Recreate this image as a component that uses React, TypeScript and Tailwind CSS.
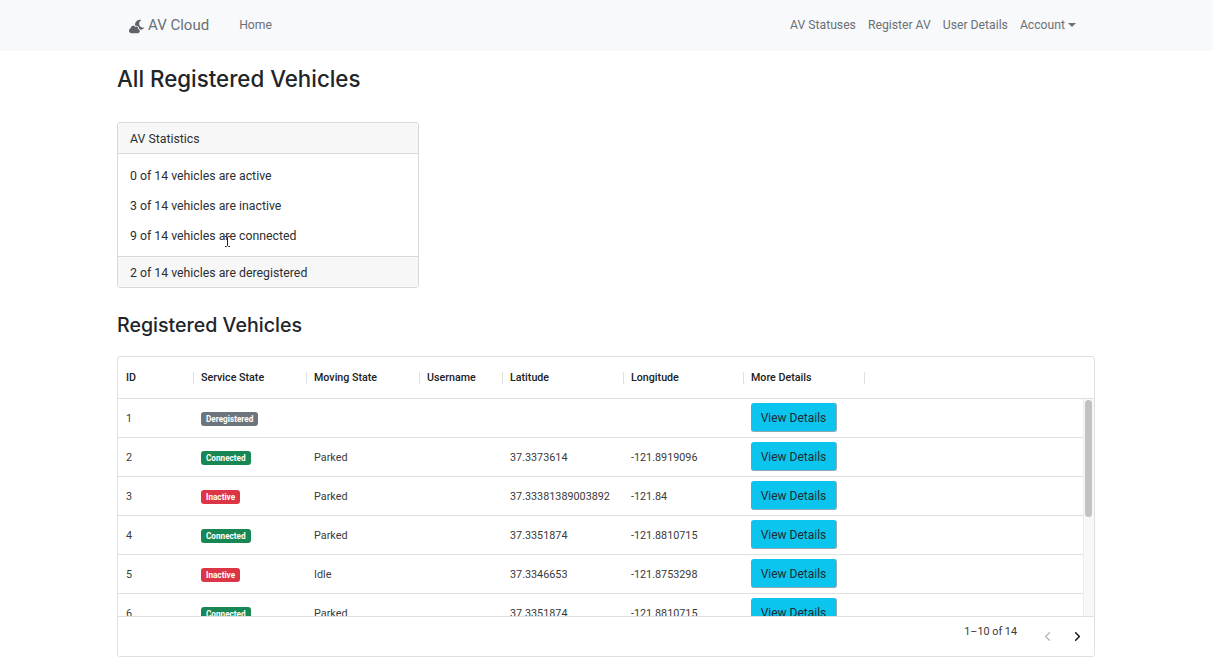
import { FaCloudMoon } from 'react-icons/fa';
import { ChevronLeft, ChevronRight } from 'lucide-react';

const navLinks = ['AV Statuses', 'Register AV', 'User Details'];

const columns = ['ID', 'Service State', 'Moving State', 'Username', 'Latitude', 'Longitude', 'More Details'];

const stateClass: Record<string, string> = {
  Deregistered: 'bg-[#6c757d]',
  Connected: 'bg-[#198754]',
  Inactive: 'bg-[#dc3545]',
};

const rows = [
  { id: 1, state: 'Deregistered', moving: '', lat: '', lng: '' },
  { id: 2, state: 'Connected', moving: 'Parked', lat: '37.3373614', lng: '-121.8919096' },
  { id: 3, state: 'Inactive', moving: 'Parked', lat: '37.33381389003892', lng: '-121.84' },
  { id: 4, state: 'Connected', moving: 'Parked', lat: '37.3351874', lng: '-121.8810715' },
  { id: 5, state: 'Inactive', moving: 'Idle', lat: '37.3346653', lng: '-121.8753298' },
  { id: 6, state: 'Connected', moving: 'Parked', lat: '37.3351874', lng: '-121.8810715' },
];

const gridCols = 'grid grid-cols-[75px_113px_113px_83px_121px_120px_121px]';

export default function App() {
  return (
    <div className="h-[665px] overflow-hidden bg-white font-['Roboto','Liberation_Sans',sans-serif] text-[#212529]">
      {/* Navbar */}
      <nav className="h-[51px] bg-[#f8f9fa] pl-[129px] pr-[137px] flex items-center text-[12.2px] text-[#6b7075]">
        <a className="flex items-center gap-[4px] text-[15px] text-[#6b7075]">
          <FaCloudMoon className="h-[15px] w-[15px] mt-[2px] text-[#5f6469]" />
          <span>AV Cloud</span>
        </a>
        <a className="ml-[30px]">Home</a>
        <div className="ml-auto flex items-center gap-[12px]">
          {navLinks.map((item) => (
            <a key={item}>{item}</a>
          ))}
          <a className="flex items-center gap-[3px]">
            Account
            <span className="mb-[1px] border-x-[4px] border-t-[4px] border-x-transparent border-t-[#6b7075]" />
          </a>
        </div>
      </nav>

      <main className="mx-[117px] w-[978px]">
        <h1 className="mt-[12px] font-['Inter','Liberation_Sans',sans-serif] text-[22.3px] leading-[32px] font-medium text-[#212529]">All Registered Vehicles</h1>

        {/* Stats card */}
        <div className="mt-[27px] w-[302px] h-[166px] flex flex-col rounded-[3px] border border-[#d9d9d9] text-[12.3px] text-[#2b2f33] overflow-hidden">
          <div className="h-[31px] flex items-center pt-[2px] px-[12px] bg-[#f7f7f7] border-b border-[#d9d9d9]">AV Statistics</div>
          <div className="relative flex-1 px-[12px] pt-[7px]">
            <p className="h-[30px] leading-[30px]">0 of 14 vehicles are active</p>
            <p className="h-[30px] leading-[30px]">3 of 14 vehicles are inactive</p>
            <p className="h-[30px] leading-[30px]">9 of 14 vehicles are connected</p>
            {/* text cursor caught in the shot */}
            <svg className="absolute left-[106px] top-[82px]" width="7" height="11" viewBox="0 0 7 11" fill="none" stroke="#222" strokeWidth="1">
              <path d="M1 .5h1.5l1 1 1-1H6M3.5 1.5v8M1 10.5h1.5l1-1 1 1H6" />
            </svg>
          </div>
          <div className="h-[31px] flex items-center pt-[2px] px-[12px] bg-[#f7f7f7] border-t border-[#d9d9d9]">2 of 14 vehicles are deregistered</div>
        </div>

        <h2 className="mt-[23px] font-['Inter','Liberation_Sans',sans-serif] text-[19.6px] leading-[28px] font-medium text-[#212529]">Registered Vehicles</h2>

        {/* Data grid */}
        <div className="mt-[17px] h-[301px] flex flex-col rounded-[3px] border border-[#e0e0e0] text-[#3a3a3a] overflow-hidden">
          <div className={`${gridCols} h-[42px] shrink-0 items-center border-b border-[#e0e0e0] text-[10.7px] font-medium text-[#212121]`}>
            {columns.map((col) => (
              <div key={col} className="relative pl-[8px] pt-[1px] flex items-center h-full">
                {col}
                <span className="absolute right-[-1px] top-[15px] h-[12px] w-px bg-[#e0e0e0]" />
              </div>
            ))}
          </div>

          <div className="flex flex-1 min-h-0">
            <div className="flex-1 min-w-0 overflow-hidden">
              {rows.map((row) => (
                <div key={row.id} className="h-[39px] border-b border-[#e0e0e0]">
                  <div className={`${gridCols} h-[38px] items-center text-[10.8px]`}>
                    <div className="pl-[8px] pt-[2px]">{row.id}</div>
                    <div className="pl-[8px] pt-[2px]">
                      <span className={`inline-block rounded-[3px] px-[5px] text-[8.2px] leading-[14px] font-bold text-white ${stateClass[row.state]}`}>
                        {row.state}
                      </span>
                    </div>
                    <div className="pl-[8px] pt-[2px]">{row.moving}</div>
                    <div className="pl-[8px]" />
                    <div className="pl-[8px] pt-[2px]">{row.lat}</div>
                    <div className="pl-[8px] pt-[2px]">{row.lng}</div>
                    <div className="pl-[8px] pb-[1px]">
                      <button className="h-[29px] w-[86px] pt-[1px] rounded-[3px] bg-[#0cc5ef] border-r border-b border-[#8fa9b5] text-[12px] text-[#1d2b33]">
                        View Details
                      </button>
                    </div>
                  </div>
                </div>
              ))}
            </div>
            {/* scrollbar */}
            <div className="w-[11px] shrink-0 bg-[#f8f8f8] border-l border-[#ececec] pl-[1px] pt-[1px]">
              <div className="h-[117px] w-[7px] rounded-full bg-[#c2c2c2]" />
            </div>
          </div>

          <div className="h-[40px] shrink-0 flex items-center justify-end border-t border-[#e0e0e0] bg-white text-[10.8px]">
            <span className="mb-[9px]">1–10 of 14</span>
            <ChevronLeft className="ml-[23px] h-[15px] w-[15px] text-[#b5b5b5]" strokeWidth={2} />
            <ChevronRight className="ml-[15px] mr-[9px] h-[15px] w-[15px] text-[#1a1a1a]" strokeWidth={2.5} />
          </div>
        </div>
      </main>
    </div>
  );
}
